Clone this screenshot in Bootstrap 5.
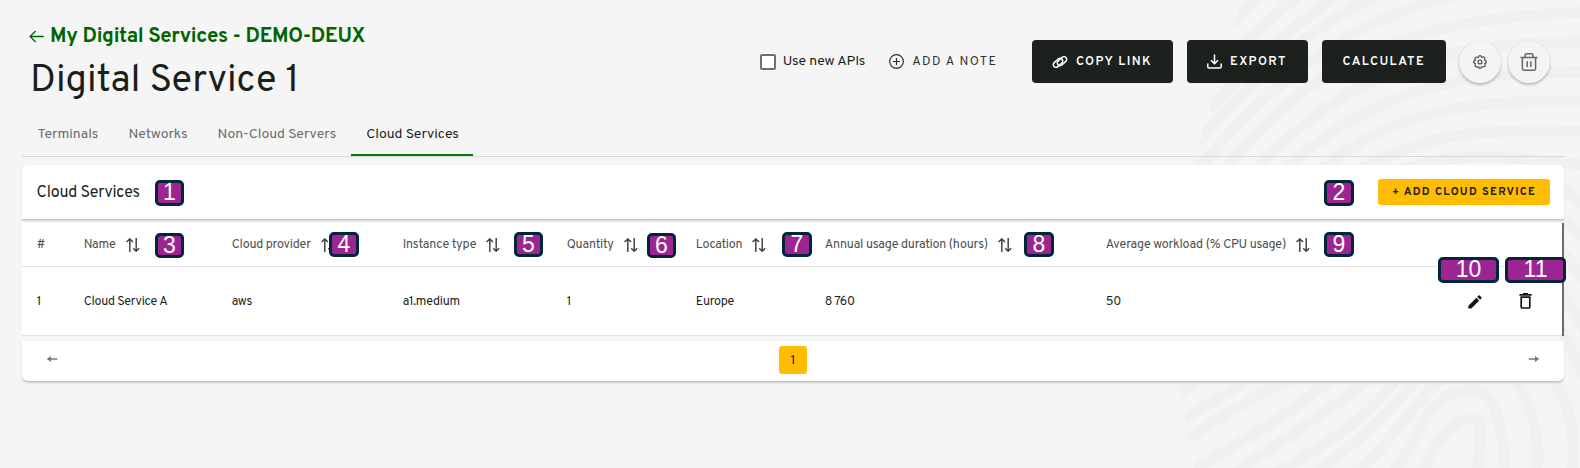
<!DOCTYPE html>
<html lang="en">
<head>
<meta charset="utf-8">
<meta name="viewport" content="width=device-width, initial-scale=1">
<title>Digital Service 1</title>
<link href="https://cdn.jsdelivr.net/npm/bootstrap@5.3.0/dist/css/bootstrap.min.css" rel="stylesheet">
<style>
body{font-family:Overpass,Roboto,sans-serif;font-size:14px;background:#f5f5f5;color:#1b1f1c;height:468px;overflow:hidden;position:relative}
.backdrop{position:absolute;right:0;top:0;z-index:-1}
.top-bar{height:117px;padding:24px 30px 0 30px}
.back-link{font-size:20.5px;font-weight:700;letter-spacing:-.32px;line-height:26px;color:#006500;text-decoration:none}
.back-link svg{margin:-2px 6px 0 -1px}
.page-title{font-size:38px;font-weight:400;line-height:48px;margin:8px 0 0}
.actions{margin-top:16px;height:43px}
.check-box{width:16px;height:16px;border:2px solid #707070;border-radius:2px;background:#fff;appearance:none;margin:0}
.check-text{margin-left:7px;letter-spacing:-.05px}
.btn-note{font-size:12.5px;letter-spacing:1.45px;line-height:1;color:#2c302d;margin:0 34px 0 24px}
.btn-dark-box{font-size:12.5px;letter-spacing:1.4px;line-height:1;background:#1c211e;color:#fff;font-weight:600;height:42.5px;border-radius:4px}
.btn-note span,.btn-dark-box span{padding-top:2px}
.round-btn{width:42px;height:42px;border-radius:50%;background:#f4f4f4;box-shadow:0 2px 3px rgba(0,0,0,.22),0 0 2px rgba(0,0,0,.08);border:0;padding:0}
.tab-row{margin:0 16px 0 22px;height:40px;border-bottom:1px solid #d7d7d7}
.tab-row a{color:#6b6b6b;text-decoration:none;padding:7.5px 14.5px 0 15.5px;line-height:20px;height:39px}
.tab-row a.on{color:#1b1f1c;border-bottom:2px solid #067a0d}
.panel{margin:8px 16px 0 22px}
.panel-head{height:55px;background:#fff;border-radius:6px 6px 0 0;border-bottom:1px solid #c6c6c6;box-shadow:0 1px 2px rgba(0,0,0,.12);padding:0 14px 0 14.5px}
.panel-head h2{font-size:16px;letter-spacing:-.18px;font-weight:400;margin:4px 0 0}
.btn-add{background:#ffbc00;color:#1c211e;font-size:11px;font-weight:700;letter-spacing:1.27px;height:26px;width:172px;border-radius:3px;padding:1px 0 0;line-height:1}
.grid-table{table-layout:fixed;width:1542px;margin:3px 0 0;background:#fff;border-right:2px solid #6a6a6a;font-size:12.5px;letter-spacing:-.2px}
.grid-table th{font-weight:400;color:#4b4f4c;height:43px;padding:2px 0 0 14.7px;border-bottom:1px solid #e2e2e2;vertical-align:middle;white-space:nowrap}
.grid-table td{height:69px;padding:3px 0 0 14.7px;vertical-align:middle;border-bottom:1px solid #e4e4e4}
.grid-table td.val{letter-spacing:-.28px}
.grid-table th svg{margin-left:10px}
.c1{width:47px}.c2{width:148px}.c3{width:171px}.c4{width:164px}.c5,.c6{width:129px}.c7{width:281px}.c8{width:340px}
.foot-bar{height:41px;background:#fff;margin-top:5px;border-radius:0 0 6px 6px;border-bottom:1px solid #c2c2c2;box-shadow:0 1px 2px rgba(0,0,0,.15);padding:0 24px}
.foot-bar>svg{margin-top:-3px}
.page-no{width:28px;height:28px;background:#ffbc00;border-radius:3px;font-size:13.5px;margin-top:-1px;padding-top:2px}
.mark-no{position:absolute;width:29px;height:25px;border:3px solid #01253a;border-radius:5px;background:#9d2591;color:#fff;font:23px/19px "Liberation Sans",sans-serif;text-align:center}
.mark-no.tall{height:26px}
.mark-no.wide{width:61px;height:26px}
</style>
</head>
<body>
<svg class="backdrop" width="420" height="468" viewBox="0 0 1260 1404" fill="none" stroke="#f0f0f0" stroke-width="33">
<defs><clipPath id="edge"><path d="M245 0L225 60 190 150 150 330 100 480 55 800 55 1110 65 1200 100 1404H1260V0Z"/></clipPath></defs>
<g clip-path="url(#edge)">
<path d="M210 75L300 -15M175 205C250 130 330 60 415 -15M145 330C270 190 400 80 530 -15M115 425C270 240 440 90 650 -15M120 500C400 170 610 60 880 -15M190 510C460 190 700 60 1270 36M285 510C560 220 830 125 1270 126M375 510C620 280 890 210 1270 216M480 510C700 330 940 295 1270 305M600 510C800 390 1010 385 1270 395M720 510C900 450 1040 470 1270 495"/>
<path d="M40 1190L130 1130M50 1270L260 1143M60 1330C230 1220 300 1180 400 1135M80 1420C330 1280 440 1200 525 1130M220 1420C480 1250 560 1190 640 1130M330 1430C560 1300 660 1220 710 1130M450 1430C650 1290 720 1190 780 1130M570 1430C740 1290 770 1180 860 1130M690 1430C790 1310 790 1170 945 1170C1010 1170 1030 1300 1035 1420M790 1420C830 1310 880 1255 945 1255C970 1255 958 1340 952 1420M1040 1100C1110 1210 1145 1290 1130 1420M1160 1100C1230 1210 1250 1290 1235 1420"/>
<path d="M1150 510C1200 560 1240 590 1280 620M1190 640L1280 720M1195 740L1280 850M1195 860L1280 1000M1200 980L1280 1140"/>
</g>
</svg>

<header class="top-bar d-flex justify-content-between align-items-start">
  <div>
    <a href="#" class="back-link d-flex align-items-center"><svg width="15" height="13" viewBox="0 0 14 12" fill="none" stroke="currentColor" stroke-width="1.2"><path d="M13.8 6H1M6.2.8L1 6l5.200 5.200"/></svg>My Digital Services - DEMO-DEUX</a>
    <h1 class="page-title">Digital Service 1</h1>
  </div>
  <div class="actions d-flex align-items-center">
    <label class="d-flex align-items-center"><input type="checkbox" class="check-box"><span class="check-text">Use new APIs</span></label>
    <button class="btn btn-note d-flex align-items-center border-0 p-0"><svg width="15" height="15" viewBox="0 0 15 15" class="me-2" fill="none" stroke="currentColor" stroke-width="1.200"><circle cx="7.500" cy="7.500" r="6.800"/><path d="M7.500 4v7M4 7.500h7"/></svg><span>ADD A NOTE</span></button>
    <button class="btn btn-dark-box d-flex align-items-center justify-content-center p-0" style="width:141px"><svg width="16" height="14" viewBox="0 0 16 14" class="me-2" fill="none" stroke="#fff" stroke-width="1.500"><rect x="-5.400" y="-2.700" width="10.800" height="5.400" rx="2.700" transform="translate(6 7.800) rotate(-42)"/><rect x="-5.400" y="-2.700" width="10.800" height="5.400" rx="2.700" transform="translate(10 6.200) rotate(-42)"/></svg><span>COPY LINK</span></button>
    <button class="btn btn-dark-box d-flex align-items-center justify-content-center p-0" style="width:121px;margin-left:14px"><svg width="15" height="15" viewBox="0 0 15 15" class="me-2" fill="none" stroke="#fff" stroke-width="1.500"><path d="M.8 9.500v3.200q0 1.300 1.300 1.300h10.800q1.300 0 1.300-1.300V9.500M7.500.5v9M4 6.200l3.500 3.500L11 6.200"/></svg><span>EXPORT</span></button>
    <button class="btn btn-dark-box d-flex align-items-center justify-content-center p-0" style="width:124.500px;margin-left:14px"><span>CALCULATE</span></button>
    <button class="round-btn d-flex align-items-center justify-content-center" style="margin:0 7px 0 13px" aria-label="Settings"><svg width="14" height="14" viewBox="0 0 14 14" fill="none" stroke="#555" stroke-width="1.300" stroke-linejoin="round"><path d="M5.400 2.400Q6 .6 7 .6T8.600 2.400Q10.800 1.400 11.500 2.500T11.600 5.400Q13.400 6 13.400 7T11.600 8.600Q12.600 10.800 11.500 11.500T8.600 11.600Q8 13.400 7 13.400T5.400 11.600Q3.200 12.600 2.500 11.500T2.400 8.600Q.6 8 .6 7T2.400 5.400Q1.400 3.200 2.500 2.500T5.400 2.400Z"/><circle cx="7" cy="7" r="1.900"/></svg></button>
    <button class="round-btn d-flex align-items-center justify-content-center" aria-label="Delete"><svg width="18" height="18" viewBox="0 0 18 18" fill="none" stroke="#666" stroke-width="1.500"><path d="M.5 4.600h17M2.400 4.600v10.900q0 1.700 1.700 1.700h9.800q1.700 0 1.700-1.700V4.600M5 4.300V2.400Q5 .8 6.600.8h4.800Q13 .8 13 2.400v1.900M7.200 8.300v5.600M10.800 8.300v5.600"/></svg></button>
  </div>
</header>

<nav class="tab-row d-flex">
  <a href="#">Terminals</a><a href="#">Networks</a><a href="#">Non-Cloud Servers</a><a href="#" class="on">Cloud Services</a>
</nav>

<main class="panel">
  <div class="panel-head d-flex align-items-center justify-content-between">
    <h2>Cloud Services</h2>
    <button class="btn btn-add border-0">+ ADD CLOUD SERVICE</button>
  </div>
  <svg width="0" height="0" class="position-absolute"><defs><g id="sort" fill="none" stroke="#444" stroke-width="1.500"><path d="M3.800 14V1M.6 4L3.800.9 7 4M10.200 0v13M7.200 10.200l3 3 3-3"/></g></defs></svg>
  <table class="grid-table">
    <colgroup><col class="c1"><col class="c2"><col class="c3"><col class="c4"><col class="c5"><col class="c6"><col class="c7"><col class="c8"><col></colgroup>
    <thead><tr>
      <th>#</th>
      <th>Name<svg width="14" height="14"><use href="#sort"/></svg></th>
      <th>Cloud provider<svg width="14" height="14"><use href="#sort"/></svg></th>
      <th>Instance type<svg width="14" height="14"><use href="#sort"/></svg></th>
      <th>Quantity<svg width="14" height="14"><use href="#sort"/></svg></th>
      <th>Location<svg width="14" height="14"><use href="#sort"/></svg></th>
      <th>Annual usage duration (hours)<svg width="14" height="14"><use href="#sort"/></svg></th>
      <th>Average workload (% CPU usage)<svg width="14" height="14"><use href="#sort"/></svg></th>
      <th></th>
    </tr></thead>
    <tbody><tr>
      <td>1</td><td class="val">Cloud Service A</td><td class="val">aws</td><td class="val">a1.medium</td><td class="val">1</td><td class="val">Europe</td><td class="val">8 760</td><td class="val">50</td>
      <td><div class="d-flex justify-content-end align-items-center" style="padding:0 30px 2px 0">
        <svg width="14" height="14" viewBox="0 0 14 14" fill="#171717" style="margin:2px 37px 0 0"><path d="M.4 13.600v-2.900L8.300 2.800l2.900 2.900-7.900 7.900ZM9.200 1.900l1.300-1.300q.6-.5 1.200 0l1.700 1.700q.5.6 0 1.200l-1.300 1.300Z"/></svg>
        <svg width="13" height="16" viewBox="0 0 13 16" fill="none" stroke="#171717" stroke-width="1.700"><path d="M.4 1.800h12.200M4 .8h5M2.200 4.200h8.600v9.800q0 1-1 1H3.200q-1 0-1-1Z"/></svg>
      </div></td>
    </tr></tbody>
  </table>
  <div class="foot-bar d-flex align-items-center justify-content-between">
    <svg width="12" height="8" viewBox="0 0 12 8" fill="#777"><path d="M.8 4L5 1v2.200h6.200v1.600H5V7Z"/></svg>
    <span class="page-no d-flex align-items-center justify-content-center">1</span>
    <svg width="12" height="8" viewBox="0 0 12 8" fill="#777"><path d="M11.200 4L7 1v2.200H.8v1.600H7V7Z"/></svg>
  </div>
</main>

<div class="mark-no tall" style="left:155px;top:180px">1</div>
<div class="mark-no tall" style="left:1324px;top:180px;width:30px">2</div>
<div class="mark-no" style="left:155px;top:233px">3</div>
<div class="mark-no" style="left:329px;top:232px;width:30px">4</div>
<div class="mark-no" style="left:514px;top:232px">5</div>
<div class="mark-no" style="left:647px;top:233px">6</div>
<div class="mark-no" style="left:782px;top:232px;width:30px">7</div>
<div class="mark-no" style="left:1024px;top:232px;width:30px">8</div>
<div class="mark-no" style="left:1324px;top:232px;width:30px">9</div>
<div class="mark-no wide" style="left:1438px;top:257px">10</div>
<div class="mark-no wide" style="left:1505px;top:257px">11</div>
<script src="https://cdn.jsdelivr.net/npm/bootstrap@5.3.0/dist/js/bootstrap.bundle.min.js"></script>
</body>
</html>
